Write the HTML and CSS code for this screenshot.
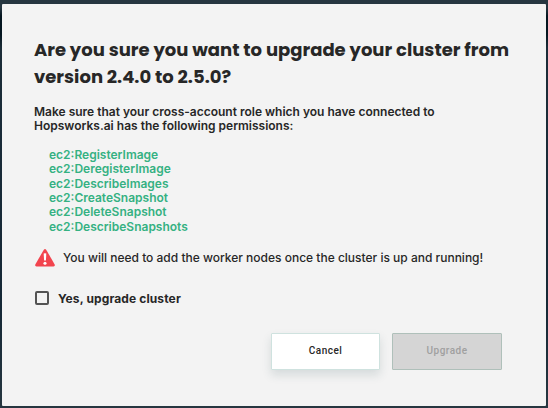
FILE: index.html
```html
<!DOCTYPE html>
<html lang="en">
<head>
<meta charset="utf-8">
<title>Upgrade cluster</title>
<link rel="stylesheet" href="styles.css">
</head>
<body>
<main class="modal">
  <h1 class="title">Are you sure you want to upgrade your cluster from<br>version 2.4.0 to 2.5.0?</h1>
  <p class="intro">Make sure that your cross-account role which you have connected to<br>Hopsworks.ai has the following permissions:</p>
  <ul class="permissions">
    <li>ec2:RegisterImage</li>
    <li>ec2:DeregisterImage</li>
    <li>ec2:DescribeImages</li>
    <li>ec2:CreateSnapshot</li>
    <li>ec2:DeleteSnapshot</li>
    <li>ec2:DescribeSnapshots</li>
  </ul>
  <div class="warning">
    <svg class="warning-icon" width="20" height="18" viewBox="0 0 20 18" aria-hidden="true">
      <path d="M8.7.9Q10-.8 11.3.9L19.7 15.4Q20.4 17.3 18.5 17.5H1.5Q-.4 17.3.3 15.4Z" fill="#f2444e"/>
      <path d="M8.7 4.6Q10 3.7 11.3 4.6L10.9 11.5H9.1Z" fill="#fff"/>
      <circle cx="10" cy="14.2" r="1.55" fill="#fff"/>
    </svg>
    <span>You will need to add the worker nodes once the cluster is up and running!</span>
  </div>
  <label class="confirm"><span class="checkbox"></span><span>Yes, upgrade cluster</span></label>
  <div class="actions">
    <button class="button cancel">Cancel</button>
    <button class="button upgrade" disabled>Upgrade</button>
  </div>
</main>
</body>
</html>
```
FILE: styles.css
```css
* { box-sizing: border-box; }
body {
  margin: 0;
  padding: 4px 2px 2px;
  height: 408px;
  overflow: hidden;
  background: linear-gradient(#263640 0, #263640 8px, #051620 16px, #051620 34px, #1b2c38 48px, #152836 75%, #263640);
  font-family: Inter, "Liberation Sans", sans-serif;
  color: #272727;
}
.modal {
  height: 402px;
  padding: 32px 44px 0 32px;
  border-radius: 1px;
  background: #f3f3f3;
}
.title {
  margin: 0;
  font: 700 18px/27px Poppins, Inter, sans-serif;
  white-space: nowrap;
}
.intro {
  margin: 15px 0 0;
  font-size: 12px;
  font-weight: 600;
  line-height: 14.3px;
  white-space: nowrap;
}
.permissions {
  margin: 14.2px 0 0;
  padding: 0 0 0 15px;
  list-style: none;
  color: #35b182;
  font-size: 12px;
  font-weight: 600;
  line-height: 14.4px;
}
.warning {
  display: flex;
  align-items: center;
  gap: 8.5px;
  height: 20px;
  margin: 13px 0 0 0.5px;
  font-size: 12px;
  font-weight: 500;
  white-space: nowrap;
}
.warning-icon { margin-top: 2px; }
.confirm {
  display: flex;
  align-items: center;
  gap: 9px;
  width: max-content;
  height: 16px;
  margin: 22.8px 0 0 1px;
  font-size: 12px;
  font-weight: 700;
  letter-spacing: 0.12px;
}
.checkbox {
  width: 14px;
  height: 14px;
  border: 2px solid #535353;
  border-radius: 2px;
}
.actions {
  display: flex;
  justify-content: flex-end;
  gap: 12px;
  margin-top: 27px;
}
.button {
  width: 110px;
  height: 37px;
  padding: 0 0 2px;
  border: 1px solid #cfe2df;
  border-radius: 1px;
  font: 500 10px Roboto, sans-serif;
  letter-spacing: 0.48px;
}
.cancel {
  width: 109px;
  background: #fff;
  color: #272727;
  box-shadow: 0 5px 10px rgba(50, 80, 90, 0.15);
}
.upgrade {
  background: #d5d5d5;
  border-color: #afc0ba;
  color: #a0a0a0;
}
```
